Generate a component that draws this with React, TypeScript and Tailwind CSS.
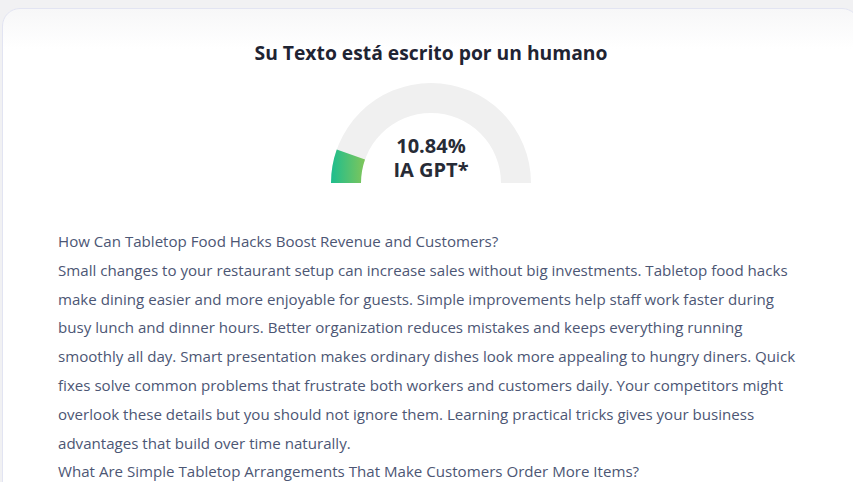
import React from "react";

const paragraphs = [
  "How Can Tabletop Food Hacks Boost Revenue and Customers?",
  "Small changes to your restaurant setup can increase sales without big investments. Tabletop food hacks make dining easier and more enjoyable for guests. Simple improvements help staff work faster during busy lunch and dinner hours. Better organization reduces mistakes and keeps everything running smoothly all day. Smart presentation makes ordinary dishes look more appealing to hungry diners. Quick fixes solve common problems that frustrate both workers and customers daily. Your competitors might overlook these details but you should not ignore them. Learning practical tricks gives your business advantages that build over time naturally.",
  "What Are Simple Tabletop Arrangements That Make Customers Order More Items?",
  "Placing small menus and dessert cards on every table reminds guests about extra options they may have missed.",
];

function Gauge({ value }: { value: number }) {
  // half donut, 200 x 100, radius 100 / 70
  const a = (value / 100) * Math.PI;
  const ox = 100 - 100 * Math.cos(a);
  const oy = 100 - 100 * Math.sin(a);
  const ix = 100 - 70 * Math.cos(a);
  const iy = 100 - 70 * Math.sin(a);
  return (
    <div className="relative w-[200px] h-[100px]">
      <svg width="200" height="100" viewBox="0 0 200 100" className="block">
        <defs>
          <linearGradient id="g" x1="0" y1="0" x2="1" y2="0">
            <stop offset="0%" stopColor="#1dbd8e" />
            <stop offset="100%" stopColor="#80c65a" />
          </linearGradient>
        </defs>
        <path d="M0 100 A100 100 0 0 1 200 100 L170 100 A70 70 0 0 0 30 100 Z" fill="#f0f0f0" />
        <path
          d={`M0 100 A100 100 0 0 1 ${ox} ${oy} L${ix} ${iy} A70 70 0 0 0 30 100 Z`}
          fill="url(#g)"
        />
      </svg>
      <div className="absolute left-0 right-0 top-[51px] flex flex-col items-center text-[20px] font-bold text-[#272b36]">
        <span className="block leading-[24px]">{value.toFixed(2)}%</span>
        <span className="block leading-[24px]">IA GPT*</span>
      </div>
    </div>
  );
}

export default function App() {
  return (
    <div className="w-[853px] h-[482px] overflow-hidden bg-[#f1f1f3] font-['Open_Sans',sans-serif]">
      <div className="ml-[2px] mt-[8px] w-[858px] h-[500px] rounded-t-[18px] border border-[#e2e4f2] bg-gradient-to-b from-[#f7f7f8] to-white to-[40px] bg-white">
        <div className="flex flex-col items-center pt-[31px]">
          <h1 className="text-[19.3px] font-bold leading-[26px] text-[#1f2433]">
            Su Texto está escrito por un humano
          </h1>
          <div className="mt-[17px]">
            <Gauge value={10.84} />
          </div>
        </div>
        <div className="mt-[44px] ml-[55px] w-[743px] text-[15.1px] leading-[28.8px] text-[#4c5674]">
          {paragraphs.map((p, i) => (
            <p key={i}>{p}</p>
          ))}
        </div>
      </div>
    </div>
  );
}
